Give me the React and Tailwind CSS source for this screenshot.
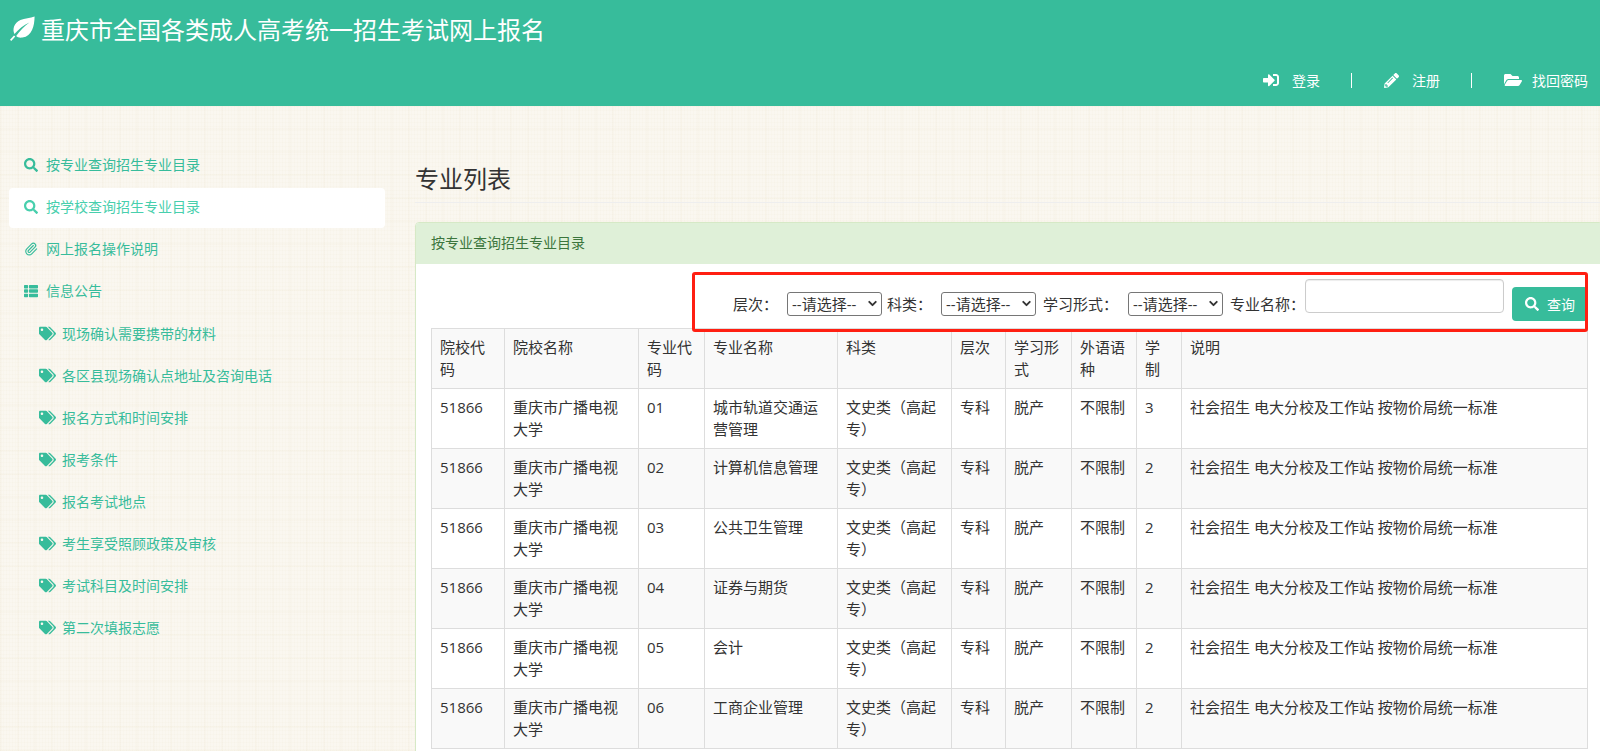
import React from "react";
import { FaSearch, FaThList, FaTags, FaSignInAlt, FaPencilAlt, FaFolderOpen } from "react-icons/fa";
import { ChevronDown, Paperclip } from "lucide-react";

const topNav = [
  { icon: <FaSearch size={14} />, label: "按专业查询招生专业目录" },
  { icon: <FaSearch size={14} />, label: "按学校查询招生专业目录", active: true },
  { icon: <Paperclip size={14} strokeWidth={2} />, label: "网上报名操作说明" },
  { icon: <FaThList size={14} />, label: "信息公告" },
];
const subNav = [
  "现场确认需要携带的材料",
  "各区县现场确认点地址及咨询电话",
  "报名方式和时间安排",
  "报考条件",
  "报名考试地点",
  "考生享受照顾政策及审核",
  "考试科目及时间安排",
  "第二次填报志愿",
];
const heads = ["院校代码", "院校名称", "专业代码", "专业名称", "科类", "层次", "学习形式", "外语语种", "学制", "说明"];
const rows = [
  ["01", "城市轨道交通运营管理", "3"],
  ["02", "计算机信息管理", "2"],
  ["03", "公共卫生管理", "2"],
  ["04", "证券与期货", "2"],
  ["05", "会计", "2"],
  ["06", "工商企业管理", "2"],
];
const cell = "border border-[#ddd] px-2 py-2 align-top font-normal text-left";

function Sel() {
  return (
    <div className="relative mt-[13px] h-6 w-[95px]">
      <select className="h-6 w-[95px] appearance-none rounded-[3px] border border-[#767676] bg-white pl-[4px] text-[15px] leading-[22px] text-[#333]">
        <option>--请选择--</option>
      </select>
      <ChevronDown size={13} strokeWidth={3.5} className="pointer-events-none absolute right-[3px] top-[5px] text-[#333]" />
    </div>
  );
}

function Label({ w, children }) {
  return <span className={`mt-[13px] h-6 shrink-0 text-[15px] leading-6 text-[#333] ${w}`}>{children}</span>;
}

function NavLink({ icon, label, gap }) {
  return (
    <a className={`flex items-center text-[14px] text-white ${gap}`}>
      {icon}
      <span>{label}</span>
    </a>
  );
}

export default function App() {
  return (
    <div className="h-[751px] w-[1600px] overflow-hidden bg-[#faf7f0] bg-[image:repeating-linear-gradient(90deg,rgba(226,214,180,0.06)_0,rgba(226,214,180,0.06)_1px,transparent_1px,transparent_3px),repeating-linear-gradient(90deg,rgba(226,214,180,0.07)_0,rgba(226,214,180,0.07)_2px,transparent_2px,transparent_17px),repeating-linear-gradient(0deg,rgba(226,214,180,0.06)_0,rgba(226,214,180,0.06)_1px,transparent_1px,transparent_4px),repeating-linear-gradient(0deg,rgba(226,214,180,0.07)_0,rgba(226,214,180,0.07)_2px,transparent_2px,transparent_23px)] [font-family:'Open_Sans','Noto_Sans_CJK_SC',sans-serif] text-[#333]">
      <header className="h-[106px] bg-[#37bc9b]">
        <div className="flex h-[60px] items-center pl-[10px] pb-[1px]">
          <svg viewBox="0 0 25 25" className="mb-[3px] h-[25px] w-[25px] text-white" fill="currentColor">
            <path d="M24.6 0.4C24.4 10 22 20 12.5 21.5C9.6 22 7.6 21.2 6.2 20C10 14.6 14 10.4 19.4 6.4C13.4 9.2 8.4 13.2 4.4 18C2.2 13 4 7 10.4 4C14.6 2 20.4 2.2 24.6 0.4Z" />
            <path d="M0.6 24.4L4.6 20" stroke="currentColor" strokeWidth="1.8" fill="none" />
          </svg>
          <h1 className="ml-[6px] text-[24px] font-normal leading-[30px] text-white">重庆市全国各类成人高考统一招生考试网上报名</h1>
        </div>
        <nav className="flex h-10 items-center justify-end pr-[12px]">
          <NavLink icon={<FaSignInAlt size={16} />} label="登录" gap="gap-[13px]" />
          <div className="ml-[31px] mr-[32px] h-[15px] w-px bg-white" />
          <NavLink icon={<FaPencilAlt size={15} />} label="注册" gap="gap-[13px]" />
          <div className="ml-[31px] mr-[32px] h-[15px] w-px bg-white" />
          <NavLink icon={<FaFolderOpen size={18} />} label="找回密码" gap="gap-[10px]" />
        </nav>
      </header>

      <div className="flex">
        <aside className="w-[400px] shrink-0 pl-[9px] pr-[15px] pt-[40px]">
          <ul className="flex flex-col gap-[2px]">
            {topNav.map((n) => (
              <li
                key={n.label}
                className={`flex h-10 items-center gap-[8px] rounded-[4px] px-[15px] pb-[3px] text-[14px] ${
                  n.active ? "bg-white text-[#48cfad]" : "text-[#37bc9b]"
                }`}
              >
                {n.icon}
                <span>{n.label}</span>
              </li>
            ))}
            {subNav.map((s) => (
              <li key={s} className="flex h-10 items-center gap-[6px] pl-[30px] pb-[1px] text-[14px] text-[#37bc9b]">
                <FaTags size={17} />
                <span>{s}</span>
              </li>
            ))}
          </ul>
        </aside>

        <main className="min-w-0 flex-1 pl-[15px]">
          <div className="w-[1185px] border-b border-[#eee] pt-[53px] pb-[3px]">
            <h2 className="text-[24px] font-normal leading-10 text-[#333]">专业列表</h2>
          </div>
          <section className="mt-[19px] w-[1188px] rounded-[4px] border border-[#d6e9c6] bg-white">
            <div className="flex h-[41px] items-center rounded-t-[3px] bg-[#dff0d8] pb-[2px] pl-[15px] text-[14px] text-[#3c763d]">
              按专业查询招生专业目录
            </div>
            <div className="px-[15px] pb-[20px]">
              <div className="relative flex h-[64px] w-[1157px] items-start justify-end pt-[15px]">
                <Label w="w-[54px]">层次：</Label>
                <Sel />
                <Label w="ml-[5px] w-[54px]">科类：</Label>
                <Sel />
                <Label w="ml-[7px] w-[85px]">学习形式：</Label>
                <Sel />
                <Label w="ml-[7px] w-[75px]">专业名称：</Label>
                <input className="h-[34px] w-[199px] rounded-[4px] border border-[#ccc] bg-white shadow-[inset_0_1px_1px_rgba(0,0,0,0.075)]" />
                <button className="ml-[8px] mt-[8px] flex h-[34px] w-[76px] items-center justify-center gap-[8px] rounded-[4px] bg-[#37bc9b] text-[14px] text-white">
                  <FaSearch size={14} />
                  <span>查询</span>
                </button>
                <div className="pointer-events-none absolute left-[261px] top-[8px] h-[60px] w-[896px] rounded-[3px] border-[3px] border-[#ff1f12]" />
              </div>
              <table className="w-[1156px] table-fixed border-collapse text-[15px] leading-[21.5px] text-[#333]">
                <colgroup>
                  <col className="w-[73px]" />
                  <col className="w-[134px]" />
                  <col className="w-[66px]" />
                  <col className="w-[133px]" />
                  <col className="w-[114px]" />
                  <col className="w-[54px]" />
                  <col className="w-[66px]" />
                  <col className="w-[65px]" />
                  <col className="w-[45px]" />
                  <col className="w-[406px]" />
                </colgroup>
                <thead>
                  <tr className="bg-[#f9f9f9]">
                    {heads.map((h) => (
                      <th key={h} className={cell}>{h}</th>
                    ))}
                  </tr>
                </thead>
                <tbody>
                  {rows.map(([code, name, years], i) => (
                    <tr key={code} className={i % 2 === 1 ? "bg-[#f9f9f9]" : "bg-white"}>
                      <td className={cell}>51866</td>
                      <td className={cell}>重庆市广播电视大学</td>
                      <td className={cell}>{code}</td>
                      <td className={cell}>{name}</td>
                      <td className={cell}>文史类（高起专）</td>
                      <td className={cell}>专科</td>
                      <td className={cell}>脱产</td>
                      <td className={cell}>不限制</td>
                      <td className={cell}>{years}</td>
                      <td className={cell}>社会招生 电大分校及工作站 按物价局统一标准</td>
                    </tr>
                  ))}
                </tbody>
              </table>
            </div>
          </section>
        </main>
      </div>
    </div>
  );
}
